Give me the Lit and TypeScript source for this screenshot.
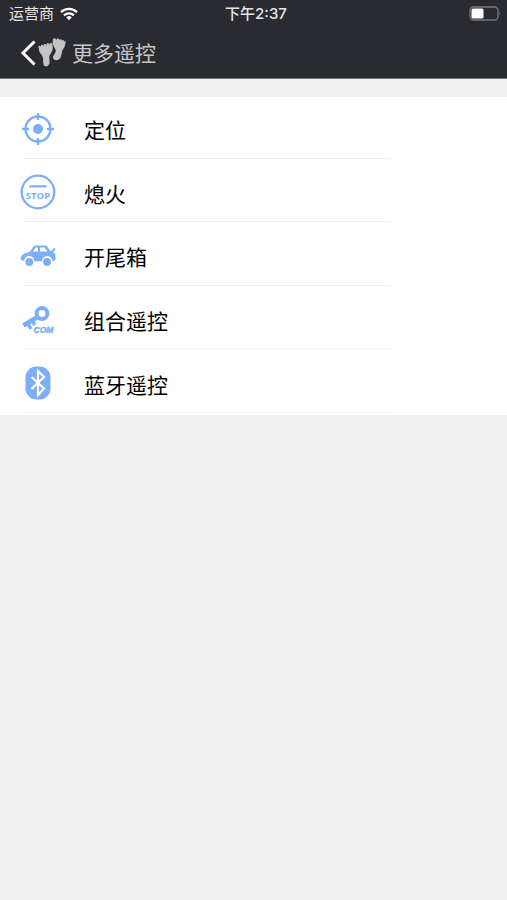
import { LitElement, html, css, svg } from "lit";
import { customElement } from "lit/decorators.js";

const icons = {
  locate: svg`
    <circle cx="18" cy="18" r="12.5" fill="none" stroke="currentColor" stroke-width="2.4"/>
    <circle cx="18" cy="18" r="5" fill="currentColor"/>
    <path d="M18 2v7M18 27v7M2 18h7M27 18h7" stroke="currentColor" stroke-width="2.4"/>`,
  stop: svg`
    <circle cx="18" cy="18" r="16.3" fill="none" stroke="currentColor" stroke-width="2.3"/>
    <path d="M10.5 12.4h15" stroke="currentColor" stroke-width="2.4" stroke-linecap="round"/>
    <text x="18" y="25.4" text-anchor="middle" font-size="9.5" font-weight="700">STOP</text>`,
  car: svg`
    <path fill="currentColor" fill-rule="evenodd" d="M.6 20.6C.8 17 4 15 9.500 14L13.500 8.800Q14.500 7.600 16 7.600H25Q26.500 7.600 27.400 8.800L30.600 13.200L34.600 9.800L35.600 11.400L33 14L35.400 16V21.500Q35 23 32.500 23.200A5 5 0 0 0 22 23.200H14.300A5 5 0 0 0 4.300 22.800L1.200 22.200ZM12.800 13.600H18V9.600H15.800ZM20 13.600H27.400L24.600 9.600H20Z"/>
    <circle cx="9.300" cy="24" r="3.900" fill="currentColor"/>
    <circle cx="27" cy="24" r="3.900" fill="currentColor"/>`,
  key: svg`
    <circle cx="22" cy="11.500" r="5.400" fill="none" stroke="currentColor" stroke-width="4"/>
    <path d="M17.500 15L3.500 23.500" stroke="currentColor" stroke-width="4.800"/>
    <path d="M7.500 21l3.500 6M12 18.500l3 4.500" stroke="currentColor" stroke-width="3.400"/>
    <text class="com" x="13.500" y="30.500" font-size="8.500" font-weight="700" font-style="italic" stroke="currentColor" stroke-width=".4">COM</text>`,
  bluetooth: svg`
    <rect x="5.500" y="1.500" width="25" height="33" rx="11" fill="currentColor"/>
    <path d="M11.500 12L24 23.500L18 30V6L24 12L11.500 24" fill="none" stroke="#fff" stroke-width="2.200"/>`,
};

const items: { label: string; icon: keyof typeof icons }[] = [
  { label: "定位", icon: "locate" },
  { label: "熄火", icon: "stop" },
  { label: "开尾箱", icon: "car" },
  { label: "组合遥控", icon: "key" },
  { label: "蓝牙遥控", icon: "bluetooth" },
];

@customElement("status-bar")
class StatusBar extends LitElement {
  static styles = css`
    :host {
      display: grid;
      grid-template-columns: 1fr auto 1fr;
      align-items: center;
      height: 27px;
      padding: 0 6px 0 9px;
      color: #e4e4e6;
      font-size: 15px;
      line-height: 20px;
    }
    .carrier { display: flex; align-items: center; gap: 6px; }
    .time { padding-left: 2px; font-weight: 500; font-family: Inter, "Noto Sans CJK SC", sans-serif; }
    .battery { justify-self: end; }
    svg { display: block; }
  `;
  render() {
    return html`
      <div class="carrier">
        <span>运营商</span>
        <svg width="18" height="14" viewBox="0 0 18 14" fill="none" stroke="#fff" stroke-width="2.300" aria-hidden="true">
          <path d="M1 5.200a11.500 11.500 0 0 1 16 0M4 8.300a7.200 7.200 0 0 1 10 0"/>
          <path d="M6.200 10.400a4 4 0 0 1 5.600 0L9 13.200z" fill="#fff" stroke="none"/>
        </svg>
      </div>
      <time class="time">下午2:37</time>
      <svg class="battery" width="32" height="15" viewBox="0 0 32 15" aria-hidden="true">
        <rect x="1" y="1" width="28" height="13" rx="3.500" fill="none" stroke="#77787c" stroke-width="1.300"/>
        <rect x="2.500" y="2.500" width="12" height="10" rx="1.500" fill="#fff"/>
        <path d="M30.300 5.500q1.500 2 0 4z" fill="#77787c"/>
      </svg>
    `;
  }
}

@customElement("nav-header")
class NavHeader extends LitElement {
  static styles = css`
    :host {
      display: flex;
      align-items: center;
      height: 52px;
      padding-left: 20px;
      border-bottom: 1px solid #77787a;
      box-sizing: border-box;
    }
    .back {
      display: flex;
      align-items: center;
      padding: 0;
      border: 0;
      background: none;
      color: #fff;
      cursor: pointer;
    }
    svg { display: block; }
    h1 { margin: 0 0 0 6px; padding-top: 2px; font-size: 21px; line-height: 30px; font-weight: 400; color: #c6c6c8; }
  `;
  render() {
    return html`
      <button class="back" aria-label="返回">
        <svg width="46" height="30" viewBox="0 0 46 30">
          <path d="M14.500 3.500L3 15L14.500 26.500" fill="none" stroke="#fff" stroke-width="3"/>
          <g fill="#c3c3c3">
            <path d="M19 9.500C23 7.300 29 6.300 32.400 7.400C33.800 11 31.500 14.500 29.500 17.500C28.500 20 30.500 23 29.300 26C28 29 24.500 29.300 23.500 26.500C22.600 23.500 24 20.500 22 17.500C20.500 15 18.300 13.500 19 9.500Z"/>
            <path d="M33 2.500C36 1.600 42 2.200 45 4.500C45.800 8 43.800 10 42.500 12.200C41.200 15 42 18.500 39.500 21C37 23.200 33.200 22.500 33 19.500C33 17 36 15 35.700 12.500C35.300 9.500 31.500 7 33 2.500Z"/>
            <circle cx="19.600" cy="9" r="1.300"/><circle cx="22.200" cy="8" r="1.300"/><circle cx="25" cy="7.200" r="1.300"/><circle cx="27.800" cy="6.700" r="1.400"/><circle cx="30.900" cy="6.700" r="1.700"/>
            <circle cx="34.500" cy="2" r="1.800"/><circle cx="37.800" cy="2" r="1.400"/><circle cx="40.500" cy="2.500" r="1.300"/><circle cx="42.800" cy="3.300" r="1.200"/><circle cx="44.700" cy="4.400" r="1.100"/>
          </g>
        </svg>
      </button>
      <h1>更多遥控</h1>
    `;
  }
}

@customElement("remote-list")
class RemoteList extends LitElement {
  static styles = css`
    :host { display: block; background: #fff; }
    ul {
      display: grid;
      grid-auto-rows: 1fr;
      min-height: 318px;
      margin: 0;
      padding: 0;
      list-style: none;
    }
    li { display: flex; flex-direction: column; }
    .row {
      flex: 1;
      display: flex;
      align-items: center;
      gap: 28px;
      width: 100%;
      padding: 3px 20px 0;
      border: 0;
      background: none;
      color: #000;
      font: inherit;
      font-size: 21px;
      line-height: 30px;
      text-align: left;
      cursor: pointer;
    }
    .icon { display: block; width: 36px; height: 36px; color: #7daef8; fill: currentColor; font-family: "Open Sans", sans-serif; }
    .com { font-family: "Liberation Sans", sans-serif; }
    .label { padding-top: 5px; }
    .line { width: calc(77% - 23px); height: 1px; margin: 0 0 2px 24px; background: #f0f0f0; }
  `;
  render() {
    return html`
      <ul>
        ${items.map(
          (item) => html`
            <li>
              <button class="row">
                <svg class="icon" viewBox="0 0 36 36" aria-hidden="true">${icons[item.icon]}</svg>
                <span class="label">${item.label}</span>
              </button>
              <div class="line"></div>
            </li>
          `
        )}
      </ul>
    `;
  }
}

@customElement("app-root")
class AppRoot extends LitElement {
  static styles = css`
    :host {
      display: block;
      min-height: 100vh;
      background: #f0f0f0;
      font-family: "Liberation Sans", "Noto Sans CJK SC", sans-serif;
    }
    header { background: #2a2b30; }
    main { padding-top: 18px; }
  `;
  render() {
    return html`
      <header>
        <status-bar></status-bar>
        <nav-header></nav-header>
      </header>
      <main><remote-list></remote-list></main>
    `;
  }
}
